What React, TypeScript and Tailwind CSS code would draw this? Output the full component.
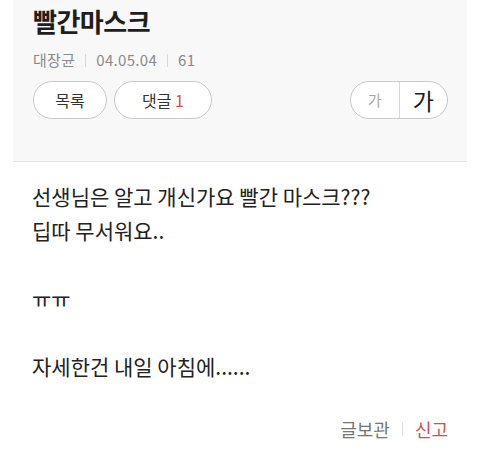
export default function App() {
  const font = { fontFamily: '"Noto Sans CJK KR", "Noto Sans", sans-serif' };

  return (
    <div className="w-[480px] h-[457px] bg-white overflow-hidden text-[#222]" style={font}>
      <div className="mx-[13px] bg-[#f8f8f8] border-b border-[#e4e4e4] h-[162px] pl-[20px] pr-[20px]">
        <h1 className="pt-[2px] text-[26px] font-bold leading-[38px] tracking-[-0.5px] text-[#1e1e1e]">빨간마스크</h1>
        <div className="mt-[9px] flex items-center text-[15px] text-[#8a8a8a] leading-[22px] tracking-[0.3px]">
          <span>대장균</span>
          <span className="mx-[10px] h-[13px] w-px bg-[#d8d8d8]" />
          <span>04.05.04</span>
          <span className="mx-[10px] h-[13px] w-px bg-[#d8d8d8]" />
          <span>61</span>
        </div>
        <div className="mt-[10px] flex items-center">
          <button className="h-[38px] w-[74px] rounded-full border border-[#c8c8c8] bg-white text-[16px] text-[#333]">
            목록
          </button>
          <button className="ml-[7px] h-[38px] w-[98px] rounded-full border border-[#c8c8c8] bg-white text-[16px] text-[#333]">
            댓글 <span className="text-[#c9534b]">1</span>
          </button>
          <div className="ml-auto mr-[-1px] flex h-[38px] w-[98px] items-center rounded-full border border-[#c8c8c8] bg-white">
            <span className="flex-1 text-center text-[15px] text-[#a8a8a8]">가</span>
            <span className="h-full w-px bg-[#d8d8d8]" />
            <span className="flex-1 text-center text-[23px] text-[#1a1a1a] leading-none">가</span>
          </div>
        </div>
      </div>
      <div className="px-[32px] pt-[17px] text-[21px] leading-[34px] text-[#222]">
        <p>선생님은 알고 개신가요 빨간 마스크???</p>
        <p>딥따 무서워요..</p>
        <p className="h-[34px]" />
        <p>ㅠㅠ</p>
        <p className="h-[34px]" />
        <p>자세한건 내일 아침에......</p>
      </div>
      <div className="mt-[35px] flex items-center justify-end pr-[32px] text-[18px] leading-[22px]">
        <span className="text-[#777]">글보관</span>
        <span className="mx-[12px] h-[14px] w-px bg-[#e0e0e0]" />
        <span className="text-[#c9534b]">신고</span>
      </div>
    </div>
  );
}
